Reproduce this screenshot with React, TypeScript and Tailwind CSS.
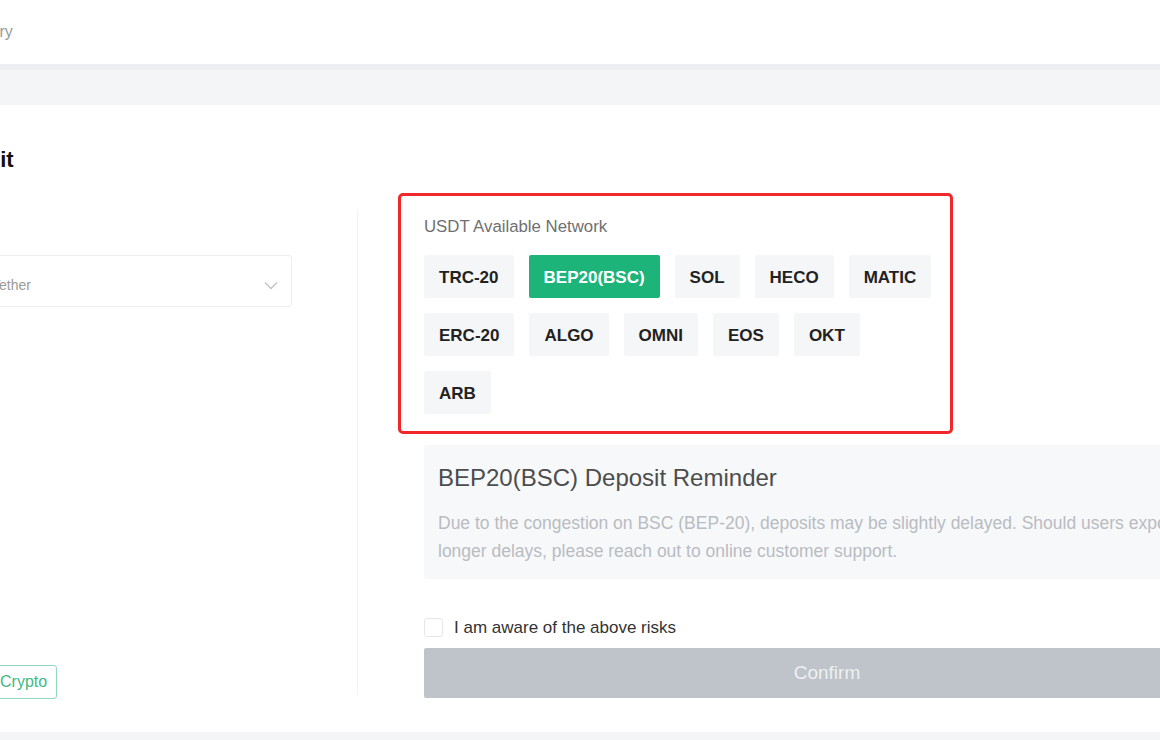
import React, { useState } from 'react';

const networks = ['TRC-20', 'BEP20(BSC)', 'SOL', 'HECO', 'MATIC', 'ERC-20', 'ALGO', 'OMNI', 'EOS', 'OKT', 'ARB'];

const Chevron = () => (
  <svg width="14" height="9" viewBox="0 0 14 9" fill="none">
    <path d="M1 1.5l6 6 6-6" stroke="#c2c2c2" strokeWidth="1.3" />
  </svg>
);

export default function App() {
  const [selected, setSelected] = useState('BEP20(BSC)');
  const [aware, setAware] = useState(false);

  return (
    <div className="w-[1160px] h-[740px] overflow-hidden bg-white font-['Liberation_Sans',Arial,sans-serif]">
      {/* top nav, cropped */}
      <div className="h-[64px] flex items-center">
        <span className="ml-[-37px] text-[16px] text-[#9a9a9a]">History</span>
      </div>
      <div className="h-[41px] bg-[#f4f5f7] border-t-[6px] border-[#eceef2]" />

      <div className="flex h-[627px]">
        {/* left column */}
        <div className="w-[358px] shrink-0 pt-[41px]">
          <h2 className="ml-[-67px] text-[22px] leading-[28px] font-bold text-[#111]">Deposit</h2>
          <div className="mt-[36px] h-[485px] border-r border-[#f3f3f3] flex flex-col pt-[45px]">
            <div className="ml-[-120px] w-[412px] h-[52px] border border-[#eeeeee] rounded-[3px] flex items-center justify-between pl-[111px] pr-[13px] pt-[8px]">
              <span className="text-[14px] text-[#9a9a9a]">Tether</span>
              <Chevron />
            </div>
            <button className="mt-auto mb-[-4px] self-start ml-[-42px] h-[34px] px-[9px] border border-[#8fdabd] rounded-[3px] text-[16px] text-[#3fb883]">
              Buy Crypto
            </button>
          </div>
        </div>

        {/* right column */}
        <div className="flex-1 pl-[40px] pt-[88px]">
          <div className="w-[555px] h-[241px] border-[3px] border-[#f0282a] rounded-[5px] pl-[23px] pt-[21px]">
            <div className="text-[16.8px] leading-[20px] text-[#707070]">USDT Available Network</div>
            <div className="mt-[18px] w-[512px] flex flex-wrap gap-x-[15px] gap-y-[15px]">
              {networks.map((n) => (
                <button
                  key={n}
                  onClick={() => setSelected(n)}
                  className={
                    n === selected
                      ? 'h-[43px] px-[15px] pt-[3px] rounded-[2px] bg-[#1db479] text-white text-[17px] font-bold'
                      : 'h-[43px] px-[15px] pt-[3px] rounded-[2px] bg-[#f5f6f7] text-[#222] text-[17px] font-bold'
                  }
                >
                  {n}
                </button>
              ))}
            </div>
          </div>

          <div className="mt-[11px] ml-[26px] w-[806px] h-[134px] bg-[#f7f8fa] rounded-[2px] pl-[14px] pr-[14px] pt-[17px]">
            <div className="text-[24px] leading-[32px] text-[#4d4d4d]">{selected} Deposit Reminder</div>
            <p className="mt-[15px] text-[17.5px] leading-[28px] text-[#b9bcc1]">
              Due to the congestion on BSC (BEP-20), deposits may be slightly delayed. Should users experience longer delays, please reach out to online customer support.
            </p>
          </div>

          <label className="mt-[39px] ml-[26px] flex items-center gap-[11px] cursor-pointer">
            <input
              type="checkbox"
              checked={aware}
              onChange={(e) => setAware(e.target.checked)}
              className="appearance-none w-[19px] h-[19px] border border-[#e6e6e6] rounded-[3px] bg-white checked:bg-[#1db479]"
            />
            <span className="text-[17px] leading-[19px] text-[#333]">I am aware of the above risks</span>
          </label>

          <button className="mt-[11px] ml-[26px] w-[806px] h-[50px] rounded-[2px] bg-[#bec4c9] text-[19px] text-[#eef0f2]">
            Confirm
          </button>
        </div>
      </div>

      <div className="h-[8px] bg-[#f4f5f7]" />
    </div>
  );
}
